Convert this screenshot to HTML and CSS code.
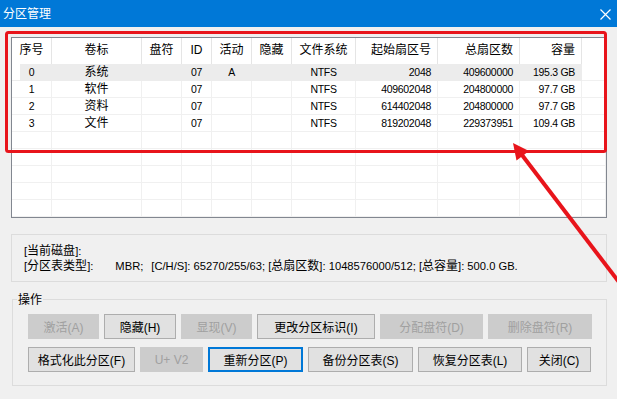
FILE: index.html
```html
<!DOCTYPE html>
<html lang="zh-CN">
<head>
    <meta charset="UTF-8">
    <title>分区管理</title>
    <link rel="stylesheet" href="styles.css">
</head>
<body>
<div class="window">
    <div class="titlebar">
        <span class="title">分区管理</span>
        <svg class="close" width="11" height="11" viewBox="0 0 11 11">
            <path d="M0.5 0.5 L10.5 10.5 M10.5 0.5 L0.5 10.5" stroke="#fff" stroke-width="1.2" fill="none"/>
        </svg>
    </div>

    <div class="content">
        <!-- partition list -->
        <div class="listview">
            <div class="row head">
                <span>序号</span><span>卷标</span><span>盘符</span><span>ID</span><span>活动</span>
                <span>隐藏</span><span>文件系统</span><span class="r">起始扇区号</span><span class="r">总扇区数</span><span class="r">容量</span><span></span>
            </div>
            <div class="row sel">
                <span>0</span><span class="zh">系统</span><span></span><span>07</span><span>A</span>
                <span></span><span>NTFS</span><span class="r">2048</span><span class="r">409600000</span><span class="r">195.3 GB</span><span></span>
            </div>
            <div class="row">
                <span>1</span><span class="zh">软件</span><span></span><span>07</span><span></span>
                <span></span><span>NTFS</span><span class="r">409602048</span><span class="r">204800000</span><span class="r">97.7 GB</span><span></span>
            </div>
            <div class="row">
                <span>2</span><span class="zh">资料</span><span></span><span>07</span><span></span>
                <span></span><span>NTFS</span><span class="r">614402048</span><span class="r">204800000</span><span class="r">97.7 GB</span><span></span>
            </div>
            <div class="row">
                <span>3</span><span class="zh">文件</span><span></span><span>07</span><span></span>
                <span></span><span>NTFS</span><span class="r">819202048</span><span class="r">229373951</span><span class="r">109.4 GB</span><span></span>
            </div>
            <div class="row"><span></span><span></span><span></span><span></span><span></span><span></span><span></span><span></span><span></span><span></span><span></span></div>
            <div class="row"><span></span><span></span><span></span><span></span><span></span><span></span><span></span><span></span><span></span><span></span><span></span></div>
            <div class="row"><span></span><span></span><span></span><span></span><span></span><span></span><span></span><span></span><span></span><span></span><span></span></div>
            <div class="row"><span></span><span></span><span></span><span></span><span></span><span></span><span></span><span></span><span></span><span></span><span></span></div>
            <div class="row"><span></span><span></span><span></span><span></span><span></span><span></span><span></span><span></span><span></span><span></span><span></span></div>
        </div>

        <!-- disk info -->
        <div class="info">
            <div>[<span class="zh">当前磁盘</span>]:</div>
            <div>[<span class="zh">分区表类型</span>]:<span class="gap1">MBR;</span><span class="gap2">[C/H/S]: 65270/255/63; [<span class="zh">总扇区数</span>]: 1048576000/512; [<span class="zh">总容量</span>]: 500.0 GB.</span></div>
        </div>

        <!-- operations -->
        <div class="ops">
            <span class="ops-label">操作</span>
            <div class="btn-row">
                <button class="btn off w71">激活(A)</button>
                <button class="btn w72">隐藏(H)</button>
                <button class="btn off w71">显现(V)</button>
                <button class="btn w118">更改分区标识(I)</button>
                <button class="btn off w103">分配盘符(D)</button>
                <button class="btn off w104">删除盘符(R)</button>
            </div>
            <div class="btn-row">
                <button class="btn w107">格式化此分区(F)</button>
                <button class="btn off w63">U+ V2</button>
                <button class="btn focus w95">重新分区(P)</button>
                <button class="btn w105">备份分区表(S)</button>
                <button class="btn w104">恢复分区表(L)</button>
                <button class="btn w64">关闭(C)</button>
            </div>
        </div>
    </div>

    <!-- red annotation drawn over the dialog -->
    <svg class="annot" width="617" height="399" viewBox="0 0 617 399">
        <rect x="6.5" y="32.5" width="599" height="119" rx="2" fill="none" stroke="#e8141b" stroke-width="3"/>
        <line x1="522" y1="155" x2="628" y2="294" stroke="#e8141b" stroke-width="4"/>
        <polygon points="513,143 516.5,160.5 529,151" fill="#e8141b"/>
    </svg>
</div>
</body>
</html>
```

FILE: styles.css
```css
body {
    margin: 0;
    font-family: "Liberation Sans", "Noto Sans CJK SC", sans-serif;
    font-size: 12px;
    color: #000;
    background-color: #f0f0f0;
}

.window {
    position: relative;
    width: 617px;
    height: 399px;
    overflow: hidden;
    background-color: #f0f0f0;
}

.titlebar {
    height: 27px;
    background-color: #0078d7;
    color: #fff;
    display: flex;
    align-items: center;
    justify-content: space-between;
    padding: 0 6px 0 3px;
}

.title {
    font-size: 12px;
    line-height: 14px;
}

.close {
    display: block;
    margin-top: 2px;
}

.content {
    padding: 10px 10px 0 11px;
}

/* list view */
.listview {
    height: 181px;
    box-sizing: border-box;
    border: 1px solid #828790;
    background-color: #fff;
    overflow: hidden;
}

.row {
    display: grid;
    grid-template-columns: 40px 90px 40px 30px 40px 40px 64px 82px 82px 62px 1fr;
    height: 17px;
    font-size: 10.5px;
    letter-spacing: -0.3px;
}

.row span {
    box-sizing: border-box;
    border-right: 1px solid #f0f0f0;
    border-bottom: 1px solid #f0f0f0;
    line-height: 16px;
    text-align: center;
    white-space: nowrap;
}

.row span.r {
    text-align: right;
    padding-right: 6px;
}

.row .zh {
    font-size: 12px;
    letter-spacing: 0;
}

.row.head {
    height: 26px;
    font-size: 12px;
    letter-spacing: 0;
}

.row.head span {
    border-bottom: none;
    border-right-color: #e5e5e5;
    line-height: 25px;
}

.row.sel span {
    background-color: #ececec;
    border-color: #ececec;
}

.row.sel span:first-child {
    background: linear-gradient(to right, #fff 8px, #ececec 8px);
}

.row.sel span:last-child {
    background-color: #fff;
    border-bottom-color: #f0f0f0;
}

/* disk info */
.info {
    margin-top: 16px;
    height: 48px;
    box-sizing: border-box;
    border: 1px solid #dcdcdc;
    padding: 9px 0 0 12px;
    line-height: 15px;
    font-size: 11.2px;
}

.info .zh {
    font-size: 12px;
}

.gap1 {
    margin-left: 22px;
}

.gap2 {
    margin-left: 8px;
}

/* operations group */
.ops {
    position: relative;
    margin: 17px 0 0 1px;
    height: 87px;
    box-sizing: border-box;
    border: 1px solid #dcdcdc;
    padding: 14px 0 0 15px;
}

.ops-label {
    position: absolute;
    top: -7px;
    left: 4px;
    padding: 0 1px;
    line-height: 14px;
    background-color: #f0f0f0;
}

.btn-row {
    display: flex;
    gap: 5px;
    margin-bottom: 8px;
}

.btn {
    height: 25px;
    box-sizing: border-box;
    border: 1px solid #adadad;
    background-color: #e1e1e1;
    color: #000;
    font-family: inherit;
    font-size: 12px;
    padding: 0;
    margin: 0;
}

.btn.off {
    background-color: #cccccc;
    border-color: #cccccc;
    color: #a0a0a0;
}

.btn.focus {
    border: 2px solid #0078d7;
}

.w63 { width: 63px; }
.w64 { width: 64px; }
.w71 { width: 71px; }
.w72 { width: 72px; }
.w95 { width: 95px; }
.w103 { width: 103px; }
.w104 { width: 104px; }
.w105 { width: 105px; }
.w107 { width: 107px; }
.w118 { width: 118px; }

.annot {
    position: absolute;
    top: 0;
    left: 0;
    pointer-events: none;
}
```
